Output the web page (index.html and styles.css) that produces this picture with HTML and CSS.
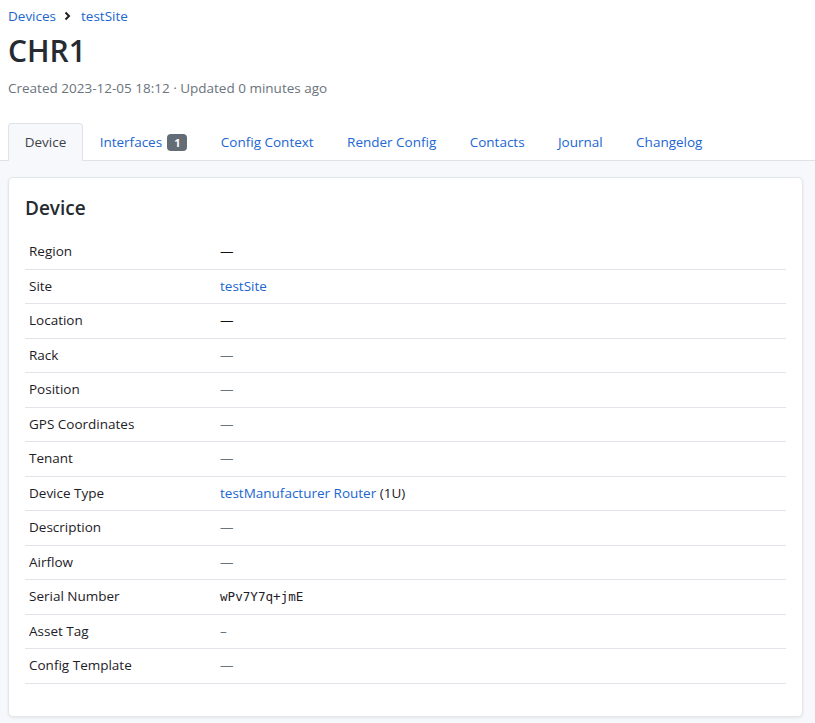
FILE: index.html
```html
<!DOCTYPE html>
<html lang="en">
<head>
<meta charset="utf-8">
<title>CHR1</title>
<link rel="stylesheet" href="styles.css">
</head>
<body>
<header class="page-header">
  <nav class="breadcrumb">
    <a href="#">Devices</a>
    <svg class="chev" width="7" height="10" viewBox="0 0 7 10"><path d="M1.5 1.5 L5 5 L1.5 8.5" fill="none" stroke="#1d2127" stroke-width="2"/></svg>
    <a href="#">testSite</a>
  </nav>
  <h1 class="title">CHR1</h1>
  <p class="meta">Created 2023-12-05 18:12 · Updated 0 minutes ago</p>
  <ul class="tabs">
    <li class="tab active">Device</li>
    <li class="tab"><a href="#">Interfaces</a><span class="badge">1</span></li>
    <li class="tab"><a href="#">Config Context</a></li>
    <li class="tab"><a href="#">Render Config</a></li>
    <li class="tab"><a href="#">Contacts</a></li>
    <li class="tab"><a href="#">Journal</a></li>
    <li class="tab"><a href="#">Changelog</a></li>
  </ul>
</header>
<main class="content">
  <section class="card">
    <h2 class="card-title">Device</h2>
    <table class="attrs">
      <tr><th>Region</th><td><span class="dash-strong">—</span></td></tr>
      <tr><th>Site</th><td><a href="#">testSite</a></td></tr>
      <tr><th>Location</th><td><span class="dash-strong">—</span></td></tr>
      <tr><th>Rack</th><td><span class="muted">—</span></td></tr>
      <tr><th>Position</th><td><span class="muted">—</span></td></tr>
      <tr><th>GPS Coordinates</th><td><span class="muted">—</span></td></tr>
      <tr><th>Tenant</th><td><span class="muted">—</span></td></tr>
      <tr><th>Device Type</th><td><a href="#">testManufacturer Router</a> (1U)</td></tr>
      <tr><th>Description</th><td><span class="muted">—</span></td></tr>
      <tr><th>Airflow</th><td><span class="muted">—</span></td></tr>
      <tr><th>Serial Number</th><td><span class="mono">wPv7Y7q+jmE</span></td></tr>
      <tr><th>Asset Tag</th><td><span class="muted">–</span></td></tr>
      <tr><th>Config Template</th><td><span class="muted">—</span></td></tr>
    </table>
  </section>
</main>
</body>
</html>
```
FILE: styles.css
```css
html, body {
  margin: 0;
  padding: 0;
}
body {
  font-family: "Open Sans", "Noto Sans", sans-serif;
  font-size: 14px;
  color: #1d2127;
  background: #f6f8fb;
}
a {
  color: #2166d2;
  text-decoration: none;
}
.page-header {
  background: #ffffff;
  padding: 6px 8px 0 8px;
  border-bottom: 1px solid #dfe3e8;
}
.breadcrumb {
  display: flex;
  align-items: center;
  height: 20px;
  font-size: 13.5px;
}
.chev {
  display: block;
  margin: 0 10px 0 8px;
}
.title {
  margin: 5px 0 0 0;
  font-size: 30px;
  font-weight: 600;
  line-height: 40px;
  color: #262b31;
}
.meta {
  margin: 7px 0 0 0;
  color: #6b737c;
  font-size: 13.5px;
  line-height: 20px;
}
.tabs {
  list-style: none;
  margin: 25px 0 0 0;
  padding: 0;
  display: flex;
}
.tab {
  padding: 9px 15.7px;
  line-height: 19px;
  font-size: 13.5px;
  display: flex;
  align-items: center;
  gap: 5px;
  margin-bottom: -1px;
  border: 1px solid transparent;
  border-bottom: none;
  border-radius: 4px 4px 0 0;
}
.tab.active {
  background: #f6f8fb;
  border-color: #dfe3e8;
  color: #3d434a;
}
.badge {
  display: inline-block;
  background: #646c76;
  color: #fff;
  font-size: 11px;
  font-weight: 700;
  line-height: 17px;
  padding: 0 7px;
  border-radius: 4px;
}
.content {
  padding: 16px 12px 8px 8px;
}
.card {
  background: #ffffff;
  border: 1px solid #e3e6ea;
  border-radius: 5px;
  box-shadow: 0 1px 3px rgba(0,0,0,0.08);
  padding: 16px 16px 32px 16px;
}
.card-title {
  margin: 0 0 13px 0;
  font-size: 19px;
  font-weight: 600;
  line-height: 28px;
  color: #262b31;
}
.attrs {
  width: 100%;
  border-collapse: collapse;
}
.attrs th, .attrs td {
  text-align: left;
  font-weight: 400;
  padding: 8px 4px;
  line-height: 17.5px;
  border-bottom: 1px solid #e1e4e8;
  font-size: 13.5px;
}
.attrs th {
  width: 183px;
}
.dash-strong {
  color: #111;
}
.muted {
  color: #6b737c;
}
.mono {
  font-family: "DejaVu Sans Mono", monospace;
  font-size: 12.6px;
}
```
